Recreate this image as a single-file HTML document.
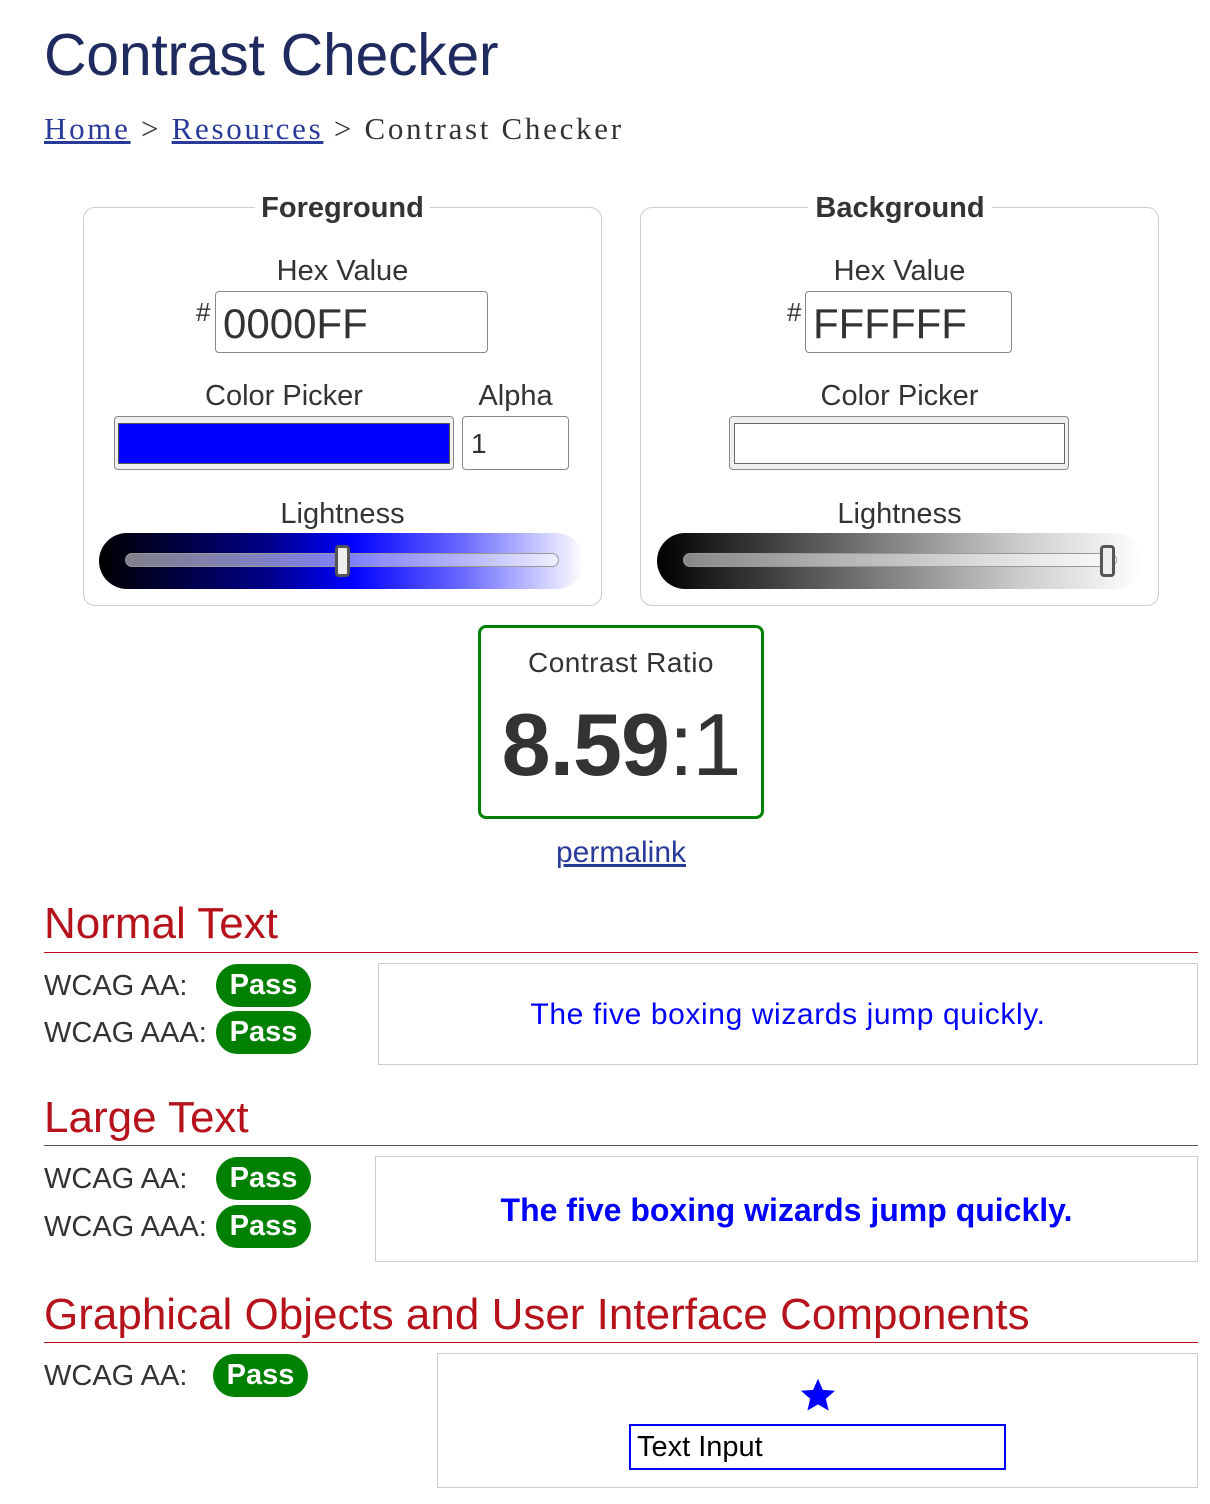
<!DOCTYPE html>
<html><head><meta charset="utf-8"><style>
*{margin:0;padding:0;box-sizing:border-box}
body{width:1210px;height:1504px;background:#fff;position:relative;font-family:"Liberation Sans",sans-serif;color:#333;overflow:hidden}
.a{position:absolute;white-space:nowrap}
.c{text-align:center}
fieldset{position:absolute;border:1px solid #ccc;border-radius:12px}
.inp{position:absolute;border:1px solid #888;border-radius:4px;background:#fff}
.slider{position:absolute;height:56px;border-radius:28px}
.track{position:absolute;height:14px;border-radius:7px;border:1px solid #999;background:rgba(255,255,255,.5)}
.thumb{position:absolute;width:15px;height:32px;border:3px solid #555;border-radius:4px;background:#eee}
.h2{position:absolute;left:44px;font-size:44px;color:#b5121b}
.rule{position:absolute;left:44px;width:1154px;height:1px;background:#b5121b}
.lbl{position:absolute;left:44px;font-size:29px;color:#333}
.pill{position:absolute;width:95px;height:43px;border-radius:22px;background:#008000;color:#fff;font-weight:bold;font-size:29px;text-align:center;line-height:43px}
.box{position:absolute;border:1px solid #ccc}
</style></head><body>
<div class="a" style="left:44px;top:21px;font-size:59px;color:#1f2a5e;letter-spacing:-0.3px">Contrast Checker</div>
<div class="a" style="left:44px;top:111px;font-family:'Liberation Serif',serif;font-size:31px;color:#333;letter-spacing:2.7px"><span style="color:#2a3a99;text-decoration:underline">Home</span> &gt; <span style="color:#2a3a99;text-decoration:underline">Resources</span> &gt; Contrast Checker</div>

<fieldset style="left:83px;top:207px;width:519px;height:399px"></fieldset>
<div class="a" style="left:255px;top:192px;width:175px;background:#fff;text-align:center;font-weight:bold;font-size:29px">Foreground</div>
<div class="a c" style="left:83px;width:519px;top:255px;font-size:29px">Hex Value</div>
<div class="a" style="left:196px;top:297px;font-size:26px">#</div>
<div class="inp" style="left:215px;top:291px;width:273px;height:62px"></div>
<div class="a" style="left:223px;top:300px;font-size:42px">0000FF</div>
<div class="a c" style="left:114px;width:340px;top:380px;font-size:29px">Color Picker</div>
<div class="a c" style="left:462px;width:107px;top:380px;font-size:29px">Alpha</div>
<div class="inp" style="left:114px;top:416px;width:340px;height:54px;background:#efefef;border-color:#888"></div>
<div class="a" style="left:118px;top:423px;width:332px;height:41px;background:#00f;border:1px solid #555"></div>
<div class="inp" style="left:462px;top:416px;width:107px;height:54px"></div>
<div class="a" style="left:471px;top:428px;font-size:28px">1</div>
<div class="a c" style="left:83px;width:519px;top:498px;font-size:29px">Lightness</div>
<div class="slider" style="left:99px;top:533px;width:485px;background:linear-gradient(90deg,#000,#00008a 35%,#00f 52%,#6a6aff 75%,#fff)"></div>
<div class="track" style="left:125px;top:553px;width:434px"></div>
<div class="thumb" style="left:335px;top:545px"></div>

<fieldset style="left:640px;top:207px;width:519px;height:399px"></fieldset>
<div class="a" style="left:808px;top:192px;width:184px;background:#fff;text-align:center;font-weight:bold;font-size:29px">Background</div>
<div class="a c" style="left:640px;width:519px;top:255px;font-size:29px">Hex Value</div>
<div class="a" style="left:787px;top:297px;font-size:26px">#</div>
<div class="inp" style="left:805px;top:291px;width:207px;height:62px"></div>
<div class="a" style="left:813px;top:300px;font-size:42px">FFFFFF</div>
<div class="a c" style="left:640px;width:519px;top:380px;font-size:29px">Color Picker</div>
<div class="inp" style="left:729px;top:416px;width:340px;height:54px;background:#efefef"></div>
<div class="a" style="left:734px;top:423px;width:331px;height:41px;background:#fff;border:1px solid #666"></div>
<div class="a c" style="left:640px;width:519px;top:498px;font-size:29px">Lightness</div>
<div class="slider" style="left:657px;top:533px;width:485px;background:linear-gradient(90deg,#000,#444 25%,#888 50%,#ccc 75%,#fff)"></div>
<div class="track" style="left:683px;top:553px;width:434px"></div>
<div class="thumb" style="left:1100px;top:545px"></div>

<div class="a" style="left:478px;top:625px;width:286px;height:194px;border:3px solid #008000;border-radius:8px"></div>
<div class="a c" style="left:478px;width:286px;top:647px;font-size:28px;letter-spacing:0.5px">Contrast Ratio</div>
<div class="a c" style="left:478px;width:286px;top:695px;font-size:88px;line-height:100px;letter-spacing:-1px"><b>8.59</b>:1</div>
<div class="a c" style="left:478px;width:286px;top:836px;font-size:30px;color:#2a3a99;text-decoration:underline">permalink</div>

<div class="h2" style="top:899px">Normal Text</div>
<div class="rule" style="top:952px"></div>
<div class="lbl" style="top:970px">WCAG AA:</div>
<div class="pill" style="left:216px;top:964px">Pass</div>
<div class="lbl" style="top:1017px">WCAG AAA:</div>
<div class="pill" style="left:216px;top:1011px">Pass</div>
<div class="box" style="left:378px;top:963px;width:820px;height:102px"></div>
<div class="a c" style="left:378px;width:820px;top:998px;font-size:30px;color:#00f;letter-spacing:0.6px">The five boxing wizards jump quickly.</div>

<div class="h2" style="top:1093px">Large Text</div>
<div class="rule" style="top:1145px;background:#555"></div>
<div class="lbl" style="top:1163px">WCAG AA:</div>
<div class="pill" style="left:216px;top:1157px">Pass</div>
<div class="lbl" style="top:1211px">WCAG AAA:</div>
<div class="pill" style="left:216px;top:1205px">Pass</div>
<div class="box" style="left:375px;top:1156px;width:823px;height:106px"></div>
<div class="a c" style="left:375px;width:823px;top:1192px;font-size:32px;font-weight:bold;color:#00f">The five boxing wizards jump quickly.</div>

<div class="h2" style="top:1290px">Graphical Objects and User Interface Components</div>
<div class="rule" style="top:1342px"></div>
<div class="lbl" style="top:1360px">WCAG AA:</div>
<div class="pill" style="left:213px;top:1354px">Pass</div>
<div class="box" style="left:437px;top:1353px;width:761px;height:135px"></div>
<svg class="a" style="left:799px;top:1377px" width="38" height="36" viewBox="0 0 24 23"><path d="M12 1l3.1 7.2 7.8.6-5.9 5.1 1.8 7.6L12 17.5 5.2 21.5 7 13.9 1.1 8.8l7.8-.6z" fill="#00f"/></svg>
<div class="a" style="left:629px;top:1424px;width:377px;height:46px;border:2px solid #00f"></div>
<div class="a" style="left:637px;top:1431px;font-size:29px;color:#000">Text Input</div>
</body></html>
